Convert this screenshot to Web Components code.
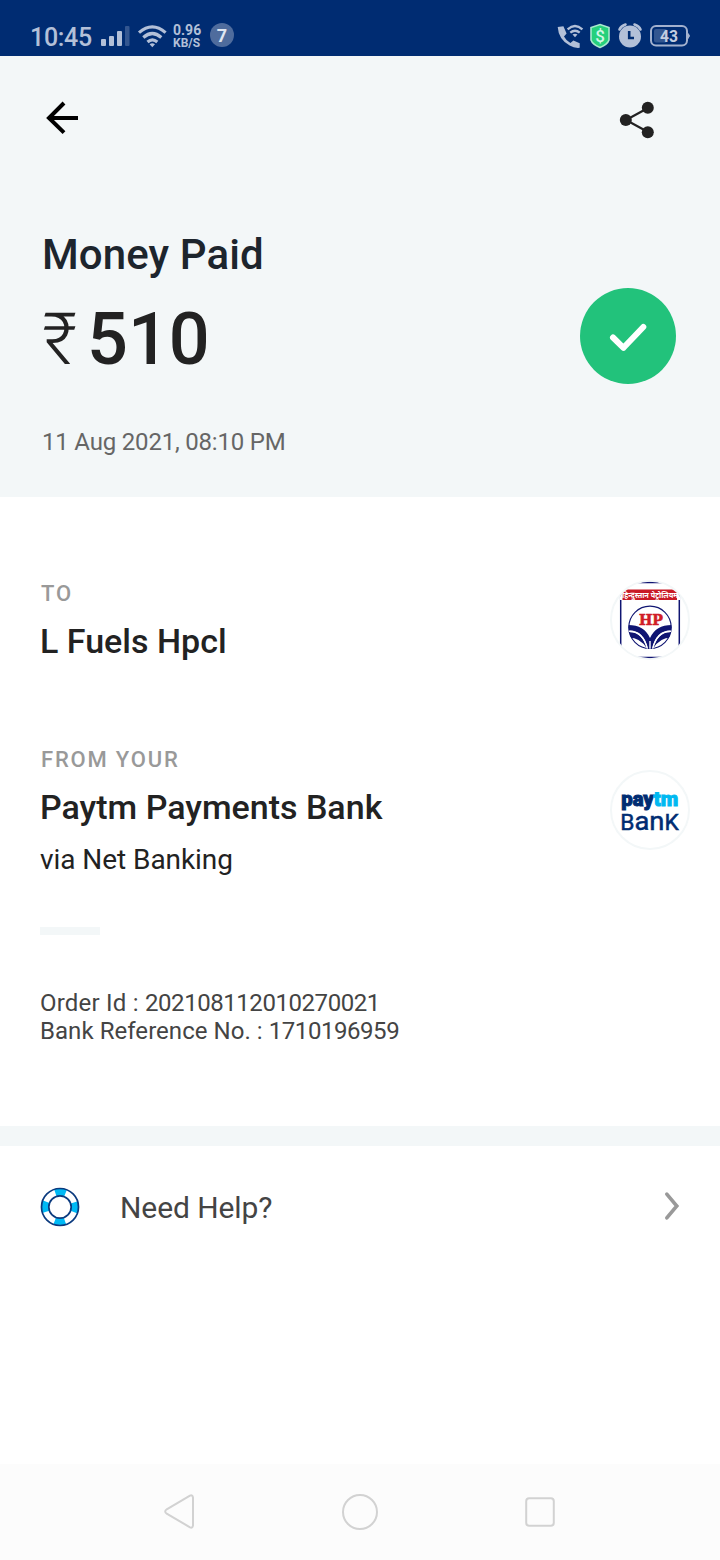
<!DOCTYPE html>
<html lang="en">
<head>
<meta charset="utf-8">
<title>Payment receipt</title>
<style>
html,body{margin:0;padding:0;background:#fff}
body{width:720px;height:1560px;overflow:hidden;font-family:Roboto,"Noto Sans",sans-serif;color:#222}
</style>
</head>
<body>
<pay-screen></pay-screen>
<script>
const define = (name, css, html) => {
  const t = document.createElement('template');
  t.innerHTML = `<style>*{box-sizing:border-box}svg{display:block;flex:none}${css}</style>${html}`;
  customElements.define(name, class extends HTMLElement {
    constructor() {
      super();
      this.attachShadow({mode: 'open'}).appendChild(t.content.cloneNode(true));
    }
  });
};

define('status-bar', `
:host{display:flex;height:56px;flex:none;background:#002c72;color:#b3c0d8;align-items:flex-start;padding:22px 30px 0 30px}
.time{font-size:25px;line-height:30px;width:71px;letter-spacing:-.3px;font-weight:500;white-space:nowrap;padding-top:1px}
.speed{width:37px;font-size:12px;line-height:11.5px;font-weight:700;padding-top:3px;white-space:nowrap}
.big{font-size:14px;line-height:11px}
.count{width:24px;height:24px;border-radius:50%;background:#4f6c9d;color:#dfe6f1;font-weight:700;font-size:18px;line-height:25px;text-align:center;margin-top:1px}
.grow{flex:1}
`, `
<div class="time">10:45</div>
<svg width="72" height="30" viewBox="101 22 72 30"><g fill="#b3c0d8"><rect x="101" y="39" width="5" height="7" rx="1"/><rect x="109" y="36" width="5" height="10" rx="1"/><rect x="117" y="31" width="5" height="15" rx="1"/><rect x="125" y="26" width="4.500" height="20" rx="1" fill="#335690"/></g>
<g fill="none" stroke="#b3c0d8" stroke-width="3.200"><path d="M139 32.600q13.300-11.500 26.600 0M143.300 37.500q9-8 18 0M147.500 42q4.900-4.300 9.800 0"/></g><path d="M149.600 44.200q2.700-2 5.400 0l-2.700 3z" fill="#b3c0d8"/></svg>
<div class="speed"><span class="big">0.96</span><br>KB/S</div>
<div class="count">7</div><div class="grow"></div>
<svg width="133" height="32" viewBox="557 22 133 32">
<path d="M557.700 27l5.700-.7 3.200 7.200-2.600 3q2 4 6.400 6.500l3-2.600 6.300 2.800v4.600q-5.500.5-10-2.200Q558.500 39.500 557.700 27z" fill="#b3c0d8"/>
<g fill="none" stroke="#b3c0d8" stroke-width="2.300"><path d="M567.600 29.300q7.400-6.500 14.800 0M570.300 32.700q4.700-4 9.400 0"/></g><path d="M572.500 34.500q2.500-1.700 5 0l-2.500 2.800z" fill="#b3c0d8"/>
<path d="M600 24.500l9 3v12.500q-1.500 4.500-9 7.500q-7.500-3-9-7.500V27.500z" fill="#26d07c" stroke="#a9e9cd" stroke-width="1.600"/>
<text x="600" y="41.600" text-anchor="middle" font-family="Roboto" font-weight="500" font-size="17" fill="#d3f7e8">$</text>
<circle cx="630" cy="36.500" r="11" fill="#b3c0d8"/><path d="M619.500 29.500q1.500-3.500 6-5M640.500 29.500q-1.500-3.500-6-5" stroke="#b3c0d8" stroke-width="2.600" fill="none" stroke-linecap="round"/><path d="M629.200 31v7H634" stroke="#002c72" stroke-width="2.600" fill="none"/>
<rect x="651" y="26" width="36" height="19.500" rx="5" fill="none" stroke="#a3b1ce" stroke-width="2"/><rect x="654" y="29" width="13" height="13.500" rx="2" fill="#335690"/><path d="M688 33.500q3 2 0 5z" fill="#a3b1ce" stroke="#a3b1ce"/>
<text x="669" y="42.200" text-anchor="middle" font-family="Roboto" font-weight="700" font-size="16.500" textLength="18" lengthAdjust="spacingAndGlyphs" fill="#c3cde0">43</text>
</svg>`);

define('nav-bar', `
:host{display:flex;justify-content:space-between;padding:44px 64px 0 44px;height:174px}`, `
<svg width="36" height="36" viewBox="44 100 36 36"><path d="M64 103L49 118L64 132.600M48.500 118H78" fill="none" stroke="#000" stroke-width="4"/></svg>
<svg width="38" height="40" viewBox="618 100 38 40"><path d="M648 108L626 120L648 132" fill="none" stroke="#222" stroke-width="2.200"/><g fill="#222"><circle cx="647.800" cy="107.800" r="6"/><circle cx="625.800" cy="120" r="6"/><circle cx="647.800" cy="132.200" r="6"/></g></svg>`);

define('paid-summary', `
:host{display:flex;justify-content:space-between;padding:0 44px 0 42px;height:267px}
h1{margin:0;font-size:42px;line-height:50px;font-weight:500;color:#1d252d;letter-spacing:.1px}
.amt{display:flex;margin-top:18px;font-size:72px;line-height:84px;font-weight:500;white-space:nowrap}
.rs{font-weight:300;width:45px}
.date{margin-top:46px;font-size:24px;line-height:28px;color:#666;letter-spacing:-.19px}
.ok{margin-top:58px}`, `
<div><h1><slot name="title"></slot></h1><div class="amt"><span class="rs">₹</span><slot name="amount"></slot></div><div class="date"><slot name="date"></slot></div></div>
<svg class="ok" width="96" height="96" viewBox="0 0 96 96"><circle cx="48" cy="48" r="48" fill="#22c27b"/><path d="M33 49.500L43.500 59.800L63.300 39" fill="none" stroke="#fff" stroke-width="6" stroke-linecap="round" stroke-linejoin="round"/></svg>`);

define('pay-party', `
:host{display:flex;justify-content:space-between;padding:0 30px 0 40px}
.label{padding-left:1px;font-size:22px;line-height:26px;letter-spacing:1.8px;color:#999;font-weight:500}
.name{margin-top:14px;font-size:34px;line-height:40px;font-weight:500}
.via{margin-top:17px;font-size:28px;line-height:32px;letter-spacing:-.06px}`, `
<div><div class="label"><slot name="label"></slot></div><div class="name"><slot></slot></div><div class="via"><slot name="via"></slot></div></div>
<slot name="logo"></slot>`);

define('hp-logo', `:host{display:block;margin-top:-1px}`, `
<svg width="80" height="80" viewBox="0 0 80 80"><defs><clipPath id="c"><circle cx="40" cy="40" r="38.200"/></clipPath><clipPath id="b"><rect x="12" y="9.500" width="56" height="11"/></clipPath><clipPath id="d"><circle cx="40" cy="47.300" r="21.500"/></clipPath></defs>
<circle cx="40" cy="40" r="39" fill="#fff" stroke="#f3f7f8" stroke-width="2"/>
<g clip-path="url(#c)"><rect x="10.700" y="2.500" width="58.600" height="75" rx="2" fill="#fff" stroke="#101572" stroke-width="1.500"/>
<path d="M10 9.500h60v10.500H10z" fill="#fff"/><rect x="12.500" y="9.500" width="54.500" height="10.500" fill="#c91925"/><g clip-path="url(#b)"><text x="40" y="18" text-anchor="middle" font-family="Noto Sans Devanagari,Noto Sans,sans-serif" font-weight="700" font-size="8.500" textLength="56" lengthAdjust="spacingAndGlyphs" fill="#fff">हिन्दुस्तान पेट्रोलियम</text></g></g>
<circle cx="40" cy="47.300" r="21.200" fill="none" stroke="#101572" stroke-width="1.100"/>
<text x="41" y="44.600" text-anchor="middle" font-family="DejaVu Serif" font-weight="700" font-size="14.800" textLength="24" lengthAdjust="spacingAndGlyphs" fill="#d01c28" stroke="#d01c28" stroke-width=".6">HP</text>
<g clip-path="url(#d)"><path d="M17 45q17-.5 23 13Q46 44.500 63 45v5.500q-17-1-21 19h-4Q34 49.500 17 50.500z" fill="#101572"/>
<path d="M17 52.500q14-2.500 20 16q-7-11-18-11zM63 52.500q-14-2.500-20 16q7-11 18-11z" fill="#101572"/>
<path d="M17 51.500q16-2 20.500 18M63 51.500q-16-2-20.500 18M40 61v9" fill="none" stroke="#fff" stroke-width="1.400"/></g></svg>`);

define('paytm-logo', `:host{display:block;margin-top:23px}`, `
<svg width="80" height="80" viewBox="0 0 80 80"><circle cx="40" cy="40" r="39" fill="#fff" stroke="#f3f7f8" stroke-width="2"/>
<text x="11.300" y="36" font-family="Roboto,sans-serif" font-weight="900" font-size="21" textLength="57" lengthAdjust="spacingAndGlyphs" fill="#002c72" stroke="#002c72" stroke-width="1">pay<tspan fill="#00b9f1" stroke="#00b9f1">tm</tspan></text>
<text x="10.300" y="59.600" font-family="Roboto,sans-serif" font-weight="400" font-size="22" textLength="58.500" lengthAdjust="spacingAndGlyphs" fill="#002c72" stroke="#002c72" stroke-width=".5">B<tspan font-size="26.500">an</tspan>K</text></svg>`);

define('order-info', `
:host{display:block;padding:0 40px;font-size:24px;line-height:28px;color:#444;height:199px}
.rule{width:60px;height:8px;background:#f3f7f8;margin-bottom:54px}`, `<div class="rule"></div><slot></slot>`);

define('help-row', `
:host{display:flex;align-items:center;height:120px;padding:0 40px;color:#444;font-size:30px;line-height:36px}
.ring{position:relative;top:.5px}
.t{flex:1;margin-left:40px;padding-top:3px;letter-spacing:-.08px}`, `
<svg class="ring" width="40" height="40" viewBox="0 0 40 40"><circle cx="20" cy="20" r="15.500" fill="none" stroke="#fff" stroke-width="8"/><circle cx="20" cy="20" r="15" fill="none" stroke="#00b9f5" stroke-width="7.500" stroke-dasharray="10.500 13.062" stroke-dashoffset="5.250"/><circle cx="20" cy="20" r="18.500" fill="none" stroke="#0b3a7e" stroke-width="1.700"/><circle cx="20" cy="20" r="11.200" fill="none" stroke="#0b3a7e" stroke-width="1.700"/></svg>
<div class="t"><slot></slot></div>
<svg width="16" height="32" viewBox="0 0 16 32"><path d="M2.800 4.200L12.800 16L2.800 27.800" fill="none" stroke="#999" stroke-width="3.600" stroke-linecap="round"/></svg>`);

define('system-nav', `
:host{display:flex;height:96px;background:#fcfcfc;justify-content:center;gap:144px;align-items:center}`, `
<svg width="36" height="36" viewBox="0 0 36 36"><path d="M28 1.700L4.700 15.300q-3 2.200 0 4.400L28 33.300Q30.500 34.500 31 31.300V3.700Q30.500.5 28 1.700z" fill="none" stroke="#d2d2d2" stroke-width="2"/></svg>
<svg width="36" height="36" viewBox="0 0 36 36"><circle cx="18" cy="18" r="17" fill="none" stroke="#d2d2d2" stroke-width="2"/></svg>
<svg width="36" height="36" viewBox="0 0 36 36"><rect x="4.200" y="4.200" width="27.600" height="27.600" rx="3" fill="none" stroke="#d2d2d2" stroke-width="2"/></svg>`);

define('pay-screen', `
:host{display:flex;flex-direction:column;width:720px;height:1560px;background:#fff}
.hero{background:#f3f7f8;height:441px;flex:none}
.to{margin-top:84px;height:166px}
.from{height:180px}
.k1{letter-spacing:.22px}.k2{letter-spacing:.05px}.n{letter-spacing:-.44px}
.band{height:20px;background:#f3f7f8}
.body{flex:1}`, `
<status-bar></status-bar>
<div class="hero"><nav-bar></nav-bar>
<paid-summary><span slot="title">Money Paid</span><span slot="amount">510</span><span slot="date">11 Aug 2021, 08:10 PM</span></paid-summary></div>
<div class="body">
<pay-party class="to"><span slot="label">TO</span>L Fuels Hpcl<hp-logo slot="logo"></hp-logo></pay-party>
<pay-party class="from"><span slot="label">FROM YOUR</span>Paytm Payments Bank<span slot="via">via Net Banking</span><paytm-logo slot="logo"></paytm-logo></pay-party>
<order-info><div><span class="k1">Order Id : </span><span class="n">202108112010270021</span></div><div><span class="k2">Bank Reference No. : </span><span class="n">1710196959</span></div></order-info>
<div class="band"></div>
<help-row>Need Help?</help-row>
</div>
<system-nav></system-nav>`);
</script>
</body>
</html>
